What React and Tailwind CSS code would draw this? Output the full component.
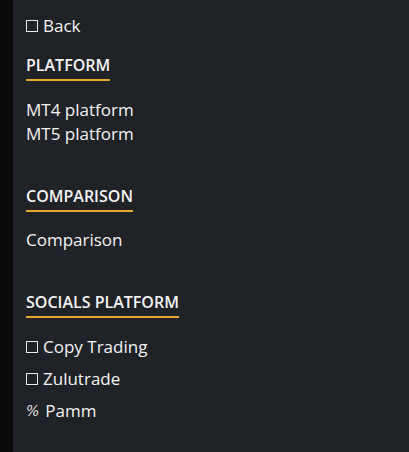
import React from "react";

const socials = [
  { label: "Copy Trading", icon: "box" },
  { label: "Zulutrade", icon: "box" },
  { label: "Pamm", icon: "pct" },
];

function Box() {
  return <span className="inline-block w-[12px] h-[12px] border-[1.5px] border-[#e8e8e8] mr-[5px]" />;
}

function Item({ label, icon }) {
  return (
    <div className="flex items-center">
      {icon === "box" && <Box />}
      {icon === "pct" && (
        <span className="mr-[6px] text-[14px] italic font-['DejaVu_Serif',serif] text-[#e8e8e8]">%</span>
      )}
      <span>{label}</span>
    </div>
  );
}

function Heading({ children }) {
  return (
    <div className="inline-block text-[16px] font-semibold leading-[20px] pb-[4px] border-b-2 border-[#e9a82a]">
      {children}
    </div>
  );
}

export default function App() {
  return (
    <div className="flex w-[409px] h-[452px] bg-[#0a0a0b] font-['Open_Sans',sans-serif] text-[#f4f4f4]">
      <div className="w-[13px] shrink-0" />
      <div className="flex-1 bg-[#1f2226] pl-[13px] pt-[15px]">
        <div className="flex items-center text-[17px] leading-[22px]">
          <Box />
          <span>Back</span>
        </div>

        <div className="mt-[16px]">
          <Heading>PLATFORM</Heading>
          <div className="mt-[17px] text-[17px] leading-[24px]">
            <div>MT4 platform</div>
            <div>MT5 platform</div>
          </div>
        </div>

        <div className="mt-[38px]">
          <Heading>COMPARISON</Heading>
          <div className="mt-[16px] text-[17px] leading-[24px]">
            <div>Comparison</div>
          </div>
        </div>

        <div className="mt-[38px]">
          <Heading>SOCIALS PLATFORM</Heading>
          <div className="mt-[17px] flex flex-col gap-[8px] text-[17px] leading-[24px]">
            {socials.map((it) => (
              <Item key={it.label} {...it} />
            ))}
          </div>
        </div>
      </div>
    </div>
  );
}
